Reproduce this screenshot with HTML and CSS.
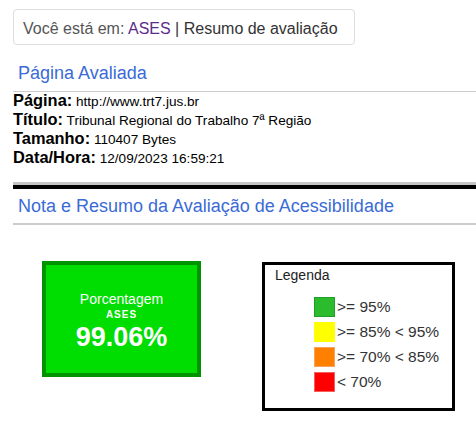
FILE: index.html
```html
<!DOCTYPE html>
<html lang="pt-BR">
<head>
    <meta charset="UTF-8">
    <meta name="viewport" content="width=device-width, initial-scale=1.0">
    <title>ASES - Resumo de avaliação</title>
    <link rel="stylesheet" href="styles.css">
</head>
<body>
    <div class="page">
        <div class="breadcrumb">Você está em: <a href="#" class="crumb-link">ASES</a> <span class="crumb-current">| Resumo de avaliação</span></div>

        <h2 class="section-title">Página Avaliada</h2>
        <div class="info">
            <div><strong>Página:</strong> <span>http://www.trt7.jus.br</span></div>
            <div><strong>Título:</strong> <span>Tribunal Regional do Trabalho 7ª Região</span></div>
            <div><strong>Tamanho:</strong> <span>110407 Bytes</span></div>
            <div><strong>Data/Hora:</strong> <span>12/09/2023 16:59:21</span></div>
        </div>

        <hr class="divider">

        <h2 class="section-title thick">Nota e Resumo da Avaliação de Acessibilidade</h2>

        <div class="summary">
            <div class="score">
                <div class="score-label">Porcentagem</div>
                <div class="score-tool">ASES</div>
                <div class="score-value">99.06%</div>
            </div>

            <div class="legend">
                <div class="legend-title">Legenda</div>
                <ul class="legend-list">
                    <li><span class="swatch green"></span>&gt;= 95%</li>
                    <li><span class="swatch yellow"></span>&gt;= 85% &lt; 95%</li>
                    <li><span class="swatch orange"></span>&gt;= 70% &lt; 85%</li>
                    <li><span class="swatch red"></span>&lt; 70%</li>
                </ul>
            </div>
        </div>
    </div>
</body>
</html>
```

FILE: styles.css
```css
body {
    font-family: "Liberation Sans", Arial, sans-serif;
    color: #000;
    margin: 0;
    background: #fff;
}
.page {
    padding: 9px 0 0 13px;
}
.breadcrumb {
    width: fit-content;
    border: 1px solid #ddd;
    border-radius: 4px;
    padding: 10px 16px 6px 9px;
    font-size: 16px;
    line-height: 18px;
    color: #555;
}
.crumb-link {
    color: #5b2b8c;
    text-decoration: none;
}
.crumb-current {
    color: #333;
}
.section-title {
    font-size: 18px;
    font-weight: normal;
    line-height: 22px;
    color: #3a6bd6;
    margin: 17px 0 0 0;
    padding: 0 0 7px 5px;
    border-bottom: 1px solid #ccc;
}
.section-title.thick {
    margin-top: 6px;
    padding-bottom: 6px;
    border-bottom: 2px solid #ccc;
}
.info {
    font-size: 13.6px;
    line-height: 19px;
}
.info strong {
    font-size: 16.4px;
    line-height: 1;
}
.divider {
    margin: 14px 0 0 0;
    height: 0;
    border: 0;
    border-top: 3px solid #c4c4c4;
    border-bottom: 4px solid #000;
}
.summary {
    display: flex;
    align-items: flex-start;
    gap: 61px;
    padding: 36px 0 0 29px;
}
.score {
    width: 151px;
    height: 83px;
    padding-top: 25px;
    background: #00dd00;
    border: 4px solid #009300;
    color: #fff;
    text-align: center;
}
.score-label {
    font-size: 14px;
    line-height: 18px;
}
.score-tool {
    font-size: 10px;
    font-weight: bold;
    line-height: 14px;
    letter-spacing: 1px;
}
.score-value {
    font-size: 27px;
    font-weight: bold;
    line-height: 30px;
}
.legend {
    margin-top: 1px;
    width: 177px;
    padding: 2px 0 16px 10px;
    border: 3px solid #000;
}
.legend-title {
    font-size: 14px;
    line-height: 16px;
    color: #222;
}
.legend-list {
    list-style: none;
    margin: 14px 0 0 39px;
    padding: 0;
    display: flex;
    flex-direction: column;
    gap: 5px;
    font-size: 15.5px;
    line-height: 20px;
    color: #333;
}
.legend-list li {
    display: flex;
    align-items: center;
    gap: 2px;
    white-space: pre;
}
.swatch {
    width: 21px;
    height: 20px;
    box-sizing: border-box;
}
.swatch.green {
    background: #2cbb2c;
    border: 1px solid #1f9f2a;
}
.swatch.yellow {
    background: #ffff00;
}
.swatch.orange {
    background: #ff7f00;
    border: 1px solid #f4a460;
}
.swatch.red {
    background: #ff0000;
    border: 1px solid #f46060;
}
```
